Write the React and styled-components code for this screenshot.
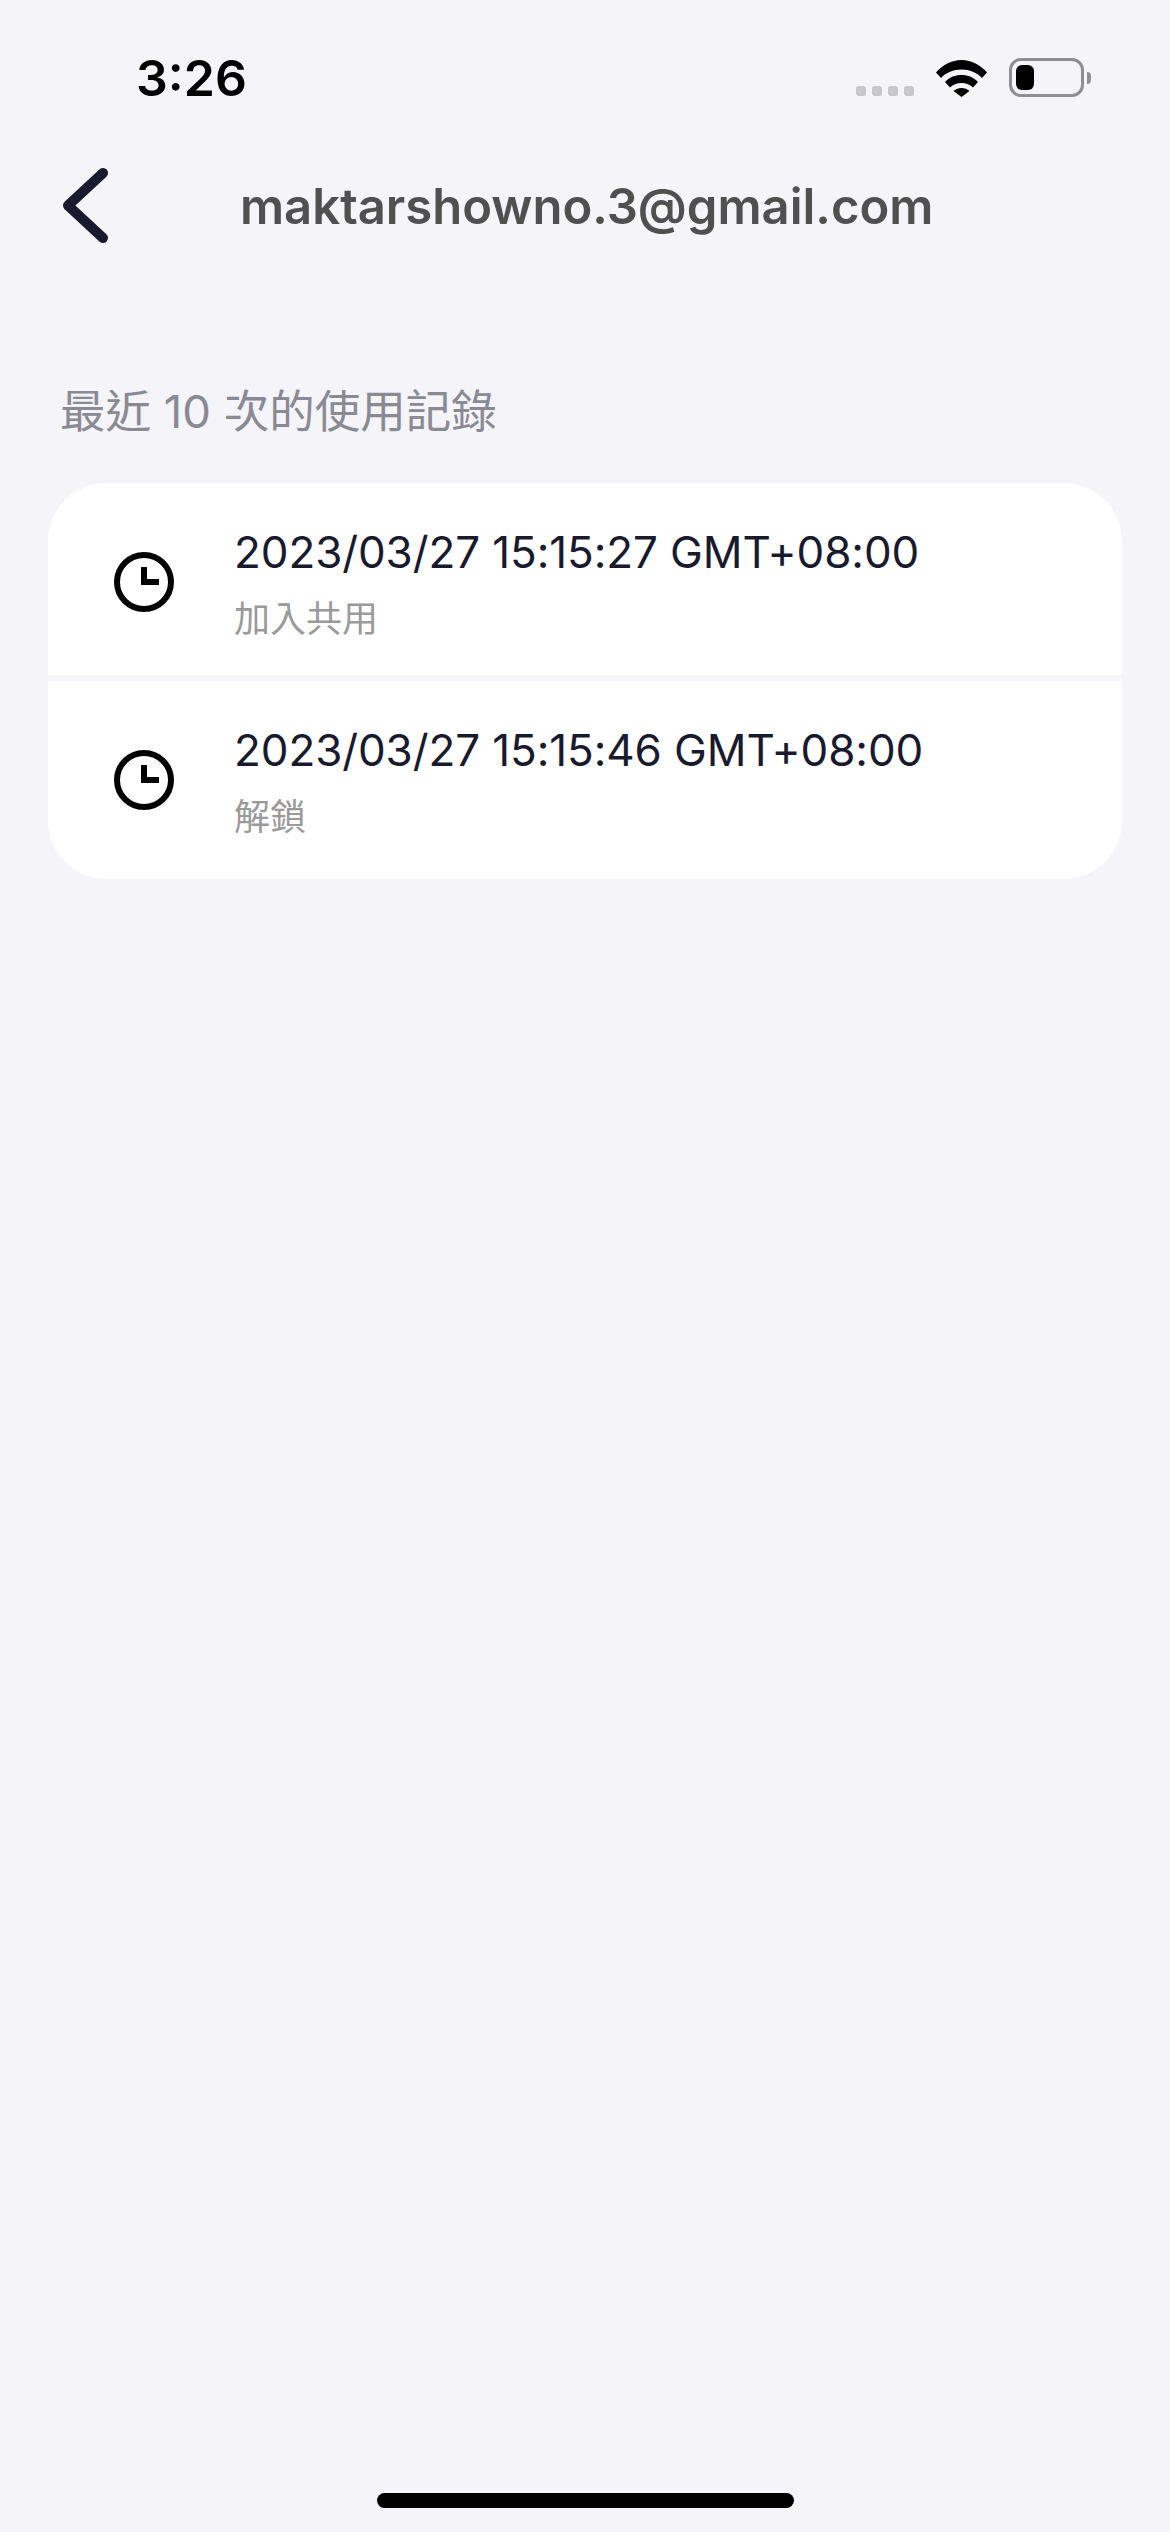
import styled, { createGlobalStyle } from 'styled-components'

const records = [
	{ time: '2023/03/27 15:15:27 GMT+08:00', action: '加入共用' },
	{ time: '2023/03/27 15:15:46 GMT+08:00', action: '解鎖' },
]

const App = () => (
	<Page>
		<GlobalStyle />
		<StatusBar>
			<Clock>3:26</Clock>
			<StatusIcons>
				<SignalDots>
					<Dot />
					<Dot />
					<Dot />
					<Dot />
				</SignalDots>
				<WifiIcon />
				<Battery>
					<BatteryFill />
				</Battery>
				<BatteryCap />
			</StatusIcons>
		</StatusBar>
		<NavBar>
			<BackIcon />
			<Title>maktarshowno.3@gmail.com</Title>
		</NavBar>
		<SectionLabel>最近 10 次的使用記錄</SectionLabel>
		<Card>
			{records.map(record => (
				<Row key={record.time}>
					<ClockIcon />
					<RowText>
						<Time>{record.time}</Time>
						<Action>{record.action}</Action>
					</RowText>
				</Row>
			))}
		</Card>
		<HomeBar />
	</Page>
)

export default App

const WifiIcon = () => (
	<WifiSvg viewBox="0 0 51 37">
		<path d="M0 12.500C6.500 5 15.500 0 25.500 0S44.500 5 51 12.500L46 18C41 12.500 33.500 9.500 25.500 9.500S10 12.500 5 18Z" />
		<path d="M9 22C13 17.500 19 15 25.500 15S38 17.500 42 22L37 27.500C34 24.500 30 23 25.500 23S17 24.500 14 27.500Z" />
		<path d="M17.500 31C20 29 22.500 28 25.500 28S31 29 33.500 31L25.500 37Z" />
	</WifiSvg>
)

const BackIcon = () => (
	<BackSvg viewBox="0 0 48 77">
		<path d="M41 6L6 38.500L41 71" />
	</BackSvg>
)

const ClockIcon = () => (
	<ClockSvg viewBox="0 0 60 60">
		<circle cx="30" cy="30" r="27" />
		<path d="M30 15V30H45" />
	</ClockSvg>
)

const GlobalStyle = createGlobalStyle`
	html, body {
		margin: 0;
		padding: 0;
		background-color: #f4f4f9;
	}
`

const Page = styled.div`
	display: flex;
	flex-direction: column;
	width: 1170px;
	height: 2532px;
	background-color: #f4f4f9;
	font-family: Inter, 'Noto Sans CJK TC', sans-serif;
`

const StatusBar = styled.div`
	display: flex;
	justify-content: space-between;
	align-items: flex-start;
	height: 140px;
	padding: 48px 79px 0 136px;
	box-sizing: border-box;
`

const Clock = styled.div`
	font-size: 50px;
	font-weight: 600;
	line-height: 60px;
	color: #000;
`

const StatusIcons = styled.div`
	display: flex;
	align-items: flex-end;
	margin-top: 10px;
`

const SignalDots = styled.div`
	display: flex;
	gap: 6px;
	margin-right: 22px;
	margin-bottom: 1px;
`

const Dot = styled.div`
	width: 10px;
	height: 10px;
	border-radius: 3px;
	background-color: #c7c7cc;
`

const WifiSvg = styled.svg`
	width: 51px;
	height: 37px;
	margin-right: 22px;
	fill: #000;
`

const Battery = styled.div`
	width: 75px;
	height: 39px;
	padding: 4px;
	box-sizing: border-box;
	border: 3px solid #8e8e93;
	border-radius: 12px;
`

const BatteryFill = styled.div`
	width: 18px;
	height: 100%;
	border-radius: 6px;
	background-color: #000;
`

const BatteryCap = styled.div`
	width: 4px;
	height: 12px;
	margin: 0 0 13px 3px;
	border-radius: 0 4px 4px 0;
	background-color: #8e8e93;
`

const NavBar = styled.div`
	display: flex;
	align-items: center;
	height: 130px;
	padding-left: 62px;
`

const BackSvg = styled.svg`
	flex: none;
	width: 48px;
	height: 77px;
	fill: none;
	stroke: #1a1a2e;
	stroke-width: 10;
	stroke-linecap: round;
	stroke-linejoin: round;
`

const Title = styled.div`
	margin: 2px 0 0 130px;
	font-size: 49px;
	font-weight: 600;
	color: #505050;
	white-space: nowrap;
`

const SectionLabel = styled.div`
	margin: 112px 0 0 60px;
	font-size: 45.5px;
	line-height: 60px;
	color: #8a8a94;
`

const Card = styled.div`
	width: 1074px;
	margin: 41px 0 0 48px;
	border-radius: 58px;
	background-color: #fff;
	overflow: hidden;
`

const Row = styled.div`
	display: flex;
	align-items: center;
	height: 198px;
	padding-left: 66px;
	box-sizing: border-box;

	&:not(:last-child) {
		box-shadow: inset 0 -6px 0 #f6f6fa;
	}
`

const ClockSvg = styled.svg`
	flex: none;
	width: 60px;
	height: 60px;
	fill: none;
	stroke: #000;
	stroke-width: 6;
`

const RowText = styled.div`
	display: flex;
	flex-direction: column;
	gap: 12px;
	margin: 2px 0 0 60px;
`

const Time = styled.div`
	font-size: 44px;
	line-height: 60px;
	letter-spacing: -0.1px;
	color: #1a1a2e;
	white-space: nowrap;
`

const Action = styled.div`
	font-size: 36px;
	line-height: 50px;
	color: #9a9a9a;
`

const HomeBar = styled.div`
	width: 417px;
	height: 15px;
	margin: auto auto 24px;
	border-radius: 8px;
	background-color: #000;
`
